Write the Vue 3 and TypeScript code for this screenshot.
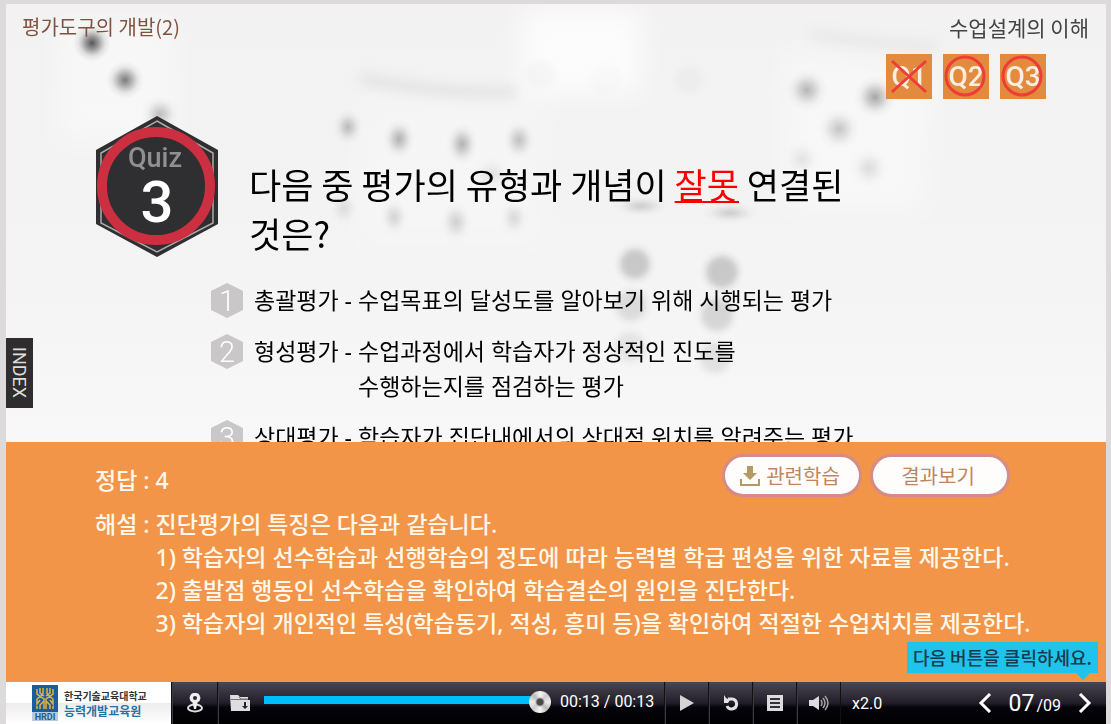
<script setup lang="ts">
import { ref } from 'vue'

interface Option {
  term: string
  lines: string[]
}

const options: Option[] = [
  { term: '총괄평가', lines: ['수업목표의 달성도를 알아보기 위해 시행되는 평가'] },
  { term: '형성평가', lines: ['수업과정에서 학습자가 정상적인 진도를', '수행하는지를 점검하는 평가'] },
  { term: '상대평가', lines: ['학습자가 집단내에서의 상대적 위치를 알려주는 평가'] },
]

const results = [
  { label: 'Q1', correct: false },
  { label: 'Q2', correct: true },
  { label: 'Q3', correct: true },
]

const notes = [
  '학습자의 선수학습과 선행학습의 정도에 따라 능력별 학급 편성을 위한 자료를 제공한다.',
  '출발점 행동인 선수학습을 확인하여 학습결손의 원인을 진단한다.',
  '학습자의 개인적인 특성(학습동기, 적성, 흥미 등)을 확인하여 적절한 수업처치를 제공한다.',
]

interface Pip {
  x: number
  y: number
  rx: number
  ry: number
  o: number
}

const pips: Pip[] = [
  { x: 86, y: 39, rx: 14, ry: 14, o: 0.85 },
  { x: 119, y: 76, rx: 14, ry: 14, o: 0.65 },
  { x: 154, y: 110, rx: 14, ry: 13, o: 0.3 },
  { x: 342, y: 123, rx: 10, ry: 13, o: 0.3 },
  { x: 393, y: 135, rx: 11, ry: 15, o: 0.36 },
  { x: 456, y: 140, rx: 11, ry: 16, o: 0.36 },
  { x: 513, y: 136, rx: 11, ry: 15, o: 0.28 },
  { x: 338, y: 204, rx: 10, ry: 13, o: 0.12 },
  { x: 388, y: 213, rx: 10, ry: 14, o: 0.18 },
  { x: 450, y: 218, rx: 11, ry: 16, o: 0.2 },
  { x: 508, y: 214, rx: 10, ry: 14, o: 0.15 },
  { x: 486, y: 170, rx: 15, ry: 13, o: 0.1 },
  { x: 635, y: 202, rx: 24, ry: 6, o: 0.2 },
  { x: 724, y: 209, rx: 24, ry: 6, o: 0.2 },
  { x: 801, y: 86, rx: 16, ry: 16, o: 0.34 },
  { x: 869, y: 93, rx: 16, ry: 16, o: 0.42 },
  { x: 833, y: 125, rx: 16, ry: 16, o: 0.26 },
  { x: 796, y: 155, rx: 14, ry: 14, o: 0.1 },
  { x: 863, y: 164, rx: 15, ry: 15, o: 0.14 },
]

const discs = [
  { x: 629, y: 260, r: 15, o: 0.24 },
  { x: 716, y: 268, r: 16, o: 0.24 },
  { x: 625, y: 302, r: 15, o: 0.14 },
  { x: 711, y: 311, r: 16, o: 0.18 },
  { x: 624, y: 343, r: 15, o: 0.1 },
  { x: 709, y: 354, r: 15, o: 0.12 },
  { x: 600, y: 75, r: 14, o: 0.025 },
  { x: 535, y: 70, r: 15, o: 0.02 },
  { x: 683, y: 76, r: 14, o: 0.02 },
]

const position = ref(13)
</script>

<template>
  <div class="frame">
    <section class="quiz">
      <svg class="scene" width="1100" height="438" aria-hidden="true">
        <defs>
          <radialGradient id="pip">
            <stop offset="0" stop-color="#222" stop-opacity="0.9" />
            <stop offset="0.35" stop-color="#333" stop-opacity="0.55" />
            <stop offset="0.7" stop-color="#555" stop-opacity="0.14" />
            <stop offset="1" stop-color="#777" stop-opacity="0" />
          </radialGradient>
          <filter id="soft" x="-30%" y="-30%" width="160%" height="160%"><feGaussianBlur stdDeviation="3" /></filter>
          <filter id="haze" x="-30%" y="-50%" width="160%" height="200%"><feGaussianBlur stdDeviation="14" /></filter>
          <filter id="thin" x="-20%" y="-100%" width="140%" height="300%"><feGaussianBlur stdDeviation="6" /></filter>
        </defs>
        <g filter="url(#haze)" fill="#fff">
          <rect x="50" y="20" width="120" height="120" opacity="0.4" />
          <rect x="515" y="5" width="120" height="85" opacity="0.75" />
          <rect x="350" y="95" width="190" height="150" opacity="0.25" />
          <path d="M775 45 930 65 920 210 780 210Z" opacity="0.4" />
        </g>
        <g filter="url(#thin)" fill="none" stroke="#999" stroke-width="9">
          <path d="M355 74Q440 92 510 88" opacity="0.2" />
          <path d="M805 30Q880 42 930 42" opacity="0.12" />
        </g>
        <ellipse
          v-for="p in pips"
          :key="`${p.x}-${p.y}`"
          :cx="p.x"
          :cy="p.y"
          :rx="p.rx + 5"
          :ry="p.ry + 5"
          :opacity="p.o"
          fill="url(#pip)"
        />
        <g filter="url(#soft)">
          <circle v-for="d in discs" :key="`${d.x}-${d.y}`" :cx="d.x" :cy="d.y" :r="d.r" :opacity="d.o" fill="#444" />
        </g>
      </svg>

      <header class="top">
        <span class="chapter">평가도구의 개발(2)</span>
        <span class="course">수업설계의 이해</span>
      </header>

      <nav class="results" aria-label="퀴즈 결과">
        <button v-for="r in results" :key="r.label" type="button" class="result">
          <svg viewBox="0 0 46 45" width="46" height="45">
            <text x="23" y="32" text-anchor="middle">{{ r.label }}</text>
            <circle v-if="r.correct" cx="22" cy="22" r="19" />
            <path v-else d="M6 7 40 38M40 7 6 38" />
          </svg>
        </button>
      </nav>

      <div class="question">
        <svg class="badge" viewBox="0 0 122 142" width="122" height="142">
          <path d="M61 0 122 34V108L61 141 0 108V34Z" fill="#2f2e30" />
          <path d="M61 5 117 37V107L61 136 5 107V37Z" fill="none" stroke="#aaa" stroke-width="1.5" />
          <circle cx="60" cy="70" r="54" fill="#2f2e30" stroke="#cb2f40" stroke-width="10" />
          <text class="badge-label" x="59" y="51" text-anchor="middle">Quiz</text>
          <text class="badge-number" x="61" y="106" text-anchor="middle">3</text>
        </svg>
        <h1>다음 중 평가의 유형과 개념이 <em>잘못</em> 연결된<br />것은?</h1>
      </div>

      <ol class="options">
        <li v-for="(o, i) in options" :key="o.term">
          <svg class="number" viewBox="0 0 32 35" width="32" height="35">
            <path d="M16 0 32 8V27L16 35 0 27V8Z" fill="#c9c7c8" />
            <text x="16" y="28" text-anchor="middle">{{ i + 1 }}</text>
          </svg>
          <span class="term">{{ o.term }} - </span>
          <span class="desc"><span v-for="line in o.lines" :key="line">{{ line }}</span></span>
        </li>
      </ol>

      <button type="button" class="index">INDEX</button>
    </section>

    <section class="answer">
      <div class="actions">
        <button type="button">
          <svg viewBox="0 0 20 20" width="20" height="20" aria-hidden="true">
            <path d="M7 0H13V7H17L10 14 3 7H7Z" fill="#b39a60" />
            <path d="M1 13V19H19V13" fill="none" stroke="#b39a60" stroke-width="2" />
          </svg>
          관련학습
        </button>
        <button type="button">결과보기</button>
      </div>
      <p class="key">정답 : 4</p>
      <div class="explain">
        <span class="lead">해설 : </span>
        <div>
          <p>진단평가의 특징은 다음과 같습니다.</p>
          <p v-for="(n, i) in notes" :key="n">{{ i + 1 }}) {{ n }}</p>
        </div>
      </div>
    </section>

    <footer class="player">
      <a class="brand" href="#">
        <svg viewBox="0 0 26 36" width="26" height="36" aria-hidden="true">
          <rect width="26" height="27" fill="#1c5da0" />
          <rect y="27" width="26" height="9" fill="#b8cbdc" />
          <g fill="none" stroke="#e0b33f" stroke-width="1.500">
            <path d="M5 4V9L12 14V24M8 3V8L12 11M11 3V9L5 14V19L8 15M12 16 8 20V24M5 21V24" />
            <path d="M21 4V9L14 14V24M18 3V8L14 11M15 3V9L21 14V19L18 15M14 16 18 20V24M21 21V24" />
          </g>
          <text x="13" y="35" text-anchor="middle">HRDI</text>
        </svg>
        <span class="names"><b>한국기술교육대학교</b><b class="sub">능력개발교육원</b></span>
      </a>
      <button type="button" class="cell wide" aria-label="위치">
        <svg viewBox="0 0 18 20" width="18" height="20">
          <ellipse cx="9" cy="15" rx="7" ry="3.5" fill="none" stroke="#ddd" stroke-width="2" />
          <path d="M9 0A5 5 0 0 1 11.500 9.500L10 16H8L6.500 9.500A5 5 0 0 1 9 0Z" fill="#eee" />
          <circle cx="9" cy="5" r="2" fill="#29262f" />
        </svg>
      </button>
      <button type="button" class="cell" aria-label="자료실">
        <svg viewBox="0 0 22 18" width="22" height="18">
          <path d="M1 1H9L11 3H19V6H21V17H2Z" fill="#dedee0" />
          <path d="M2 5.500H19M10 3 12 5H19" fill="none" stroke="#77757c" />
          <path d="M15 8H17V12H19L16 15 13 12H15Z" fill="#25222b" />
        </svg>
      </button>
      <label class="seek">
        <input v-model="position" type="range" min="0" max="13" aria-label="재생 위치" />
      </label>
      <span class="time">00:13 / 00:13</span>
      <button type="button" class="cell" aria-label="재생">
        <svg viewBox="0 0 14 16" width="14" height="16"><path d="M0 0 14 8 0 16Z" fill="#d4d4d6" /></svg>
      </button>
      <button type="button" class="cell" aria-label="다시 재생">
        <svg viewBox="0 0 16 16" width="16" height="16">
          <path d="M5 4H9A5 5 0 1 1 4 11" fill="none" stroke="#e2e2e4" stroke-width="3" />
          <path d="M1 0 3 3 7 5 5 8H1Z" fill="#e2e2e4" />
        </svg>
      </button>
      <button type="button" class="cell" aria-label="목록">
        <svg viewBox="0 0 16 16" width="16" height="16">
          <rect width="16" height="16" fill="#dcdcde" />
          <path d="M3 4H13M3 8H13M3 12H13" stroke="#33303a" stroke-width="2" />
        </svg>
      </button>
      <button type="button" class="cell" aria-label="음량">
        <svg viewBox="0 0 20 16" width="20" height="16">
          <path d="M0 5H4L10 1V15L4 11H0Z" fill="#dcdcde" />
          <path d="M12 5Q14 8 12 11M14 3Q18 8 14 13M16 1Q22 8 16 15" fill="none" stroke="#a2a0a8" stroke-width="1.500" />
        </svg>
      </button>
      <button type="button" class="speed">x2.0</button>
      <div class="pager">
        <button type="button" aria-label="이전">
          <svg viewBox="0 0 14 20" width="14" height="20"><path d="M12 1 3 10 12 19" /></svg>
        </button>
        <span class="page"><span>07</span><small>/09</small></span>
        <button type="button" aria-label="다음">
          <svg viewBox="0 0 14 20" width="14" height="20"><path d="M2 1 11 10 2 19" /></svg>
        </button>
        <div class="hint" role="tooltip">다음 버튼을 클릭하세요.</div>
      </div>
    </footer>
  </div>
</template>

<style>
body {
  margin: 0;
  background: #dcdadb;
}
</style>

<style scoped>
.frame {
  box-sizing: border-box;
  display: flex;
  flex-direction: column;
  height: 100vh;
  padding: 4px 5px 0 6px;
  font-family: "Noto Sans", "Noto Sans CJK KR", sans-serif;
}

button {
  margin: 0;
  padding: 0;
  border: 0;
  background: none;
  color: inherit;
  font: inherit;
  cursor: pointer;
}

svg {
  display: block;
  flex: none;
}

.quiz {
  position: relative;
  flex: 1;
  min-height: 0;
  overflow: hidden;
  background: linear-gradient(#f2f2f2, #f3f3f3 50%, #f8f8f8);
}

.scene {
  position: absolute;
  top: 0;
  left: 0;
}

.top {
  position: relative;
  display: flex;
  justify-content: space-between;
  padding: 7px 17px 0 16px;
  font-family: "Noto Sans CJK KR", sans-serif;
  font-size: 21px;
  line-height: 32px;
}

.chapter {
  color: #805340;
  font-size: 20px;
}

.course {
  color: #444;
}

.results {
  position: relative;
  display: flex;
  justify-content: flex-end;
  gap: 11px;
  padding: 11px 60px 0 0;
}

.result {
  background: #e28b3e;
}

.result text {
  fill: #fbeee0;
  font-family: Roboto, sans-serif;
  font-size: 28px;
  font-weight: 500;
}

.result circle,
.result path {
  fill: none;
  stroke: #ee3d38;
  stroke-width: 3px;
}

.question {
  position: relative;
  display: flex;
  gap: 31px;
  padding: 17px 0 0 90px;
}

.badge-label {
  fill: #909090;
  font-family: Roboto, sans-serif;
  font-size: 27px;
  font-weight: 500;
}

.badge-number {
  fill: #fff;
  font-family: Roboto, sans-serif;
  font-size: 58px;
  font-weight: 500;
}

h1 {
  margin: 0;
  padding-top: 43px;
  color: #000;
  font-family: "Noto Sans CJK KR", sans-serif;
  font-size: 35px;
  font-weight: 400;
  line-height: 49px;
}

h1 em {
  color: #f00;
  font-style: normal;
  text-decoration: underline;
  text-decoration-thickness: 2px;
  text-underline-offset: 2px;
}

.options {
  position: relative;
  display: grid;
  gap: 16px;
  margin: 0;
  padding: 25px 0 0 205px;
  list-style: none;
  color: #000;
  font-size: 23px;
  line-height: 35px;
}

.options li {
  display: flex;
}

.number {
  margin-right: 11px;
}

.number text {
  fill: #fff;
  font-family: Roboto, sans-serif;
  font-size: 29px;
  font-weight: 300;
}

.term {
  white-space: pre;
}

.desc {
  display: grid;
}

.index {
  position: absolute;
  top: 334px;
  left: 0;
  width: 27px;
  height: 70px;
  background: #2f2d2e;
  color: #ddd;
  font-family: Roboto, sans-serif;
  font-size: 18px;
  line-height: 27px;
  writing-mode: vertical-rl;
}

.answer {
  position: relative;
  box-sizing: border-box;
  min-height: 240px;
  padding: 22px 40px 40px 89px;
  background: #f29548;
  color: #fff8ea;
  font-size: 23px;
  font-weight: 500;
  line-height: 33px;
}

.answer p {
  margin: 0;
}

.answer .key {
  margin-bottom: 11px;
}

.explain {
  display: flex;
}

.lead {
  white-space: pre;
}

.actions {
  position: absolute;
  top: 12px;
  right: 96px;
  display: flex;
  gap: 8px;
}

.actions button {
  box-sizing: border-box;
  display: flex;
  align-items: center;
  justify-content: center;
  gap: 6px;
  width: 140px;
  height: 43px;
  padding-right: 4px;
  border: 3px solid #d58b88;
  border-radius: 22px;
  background: #fffdfc;
  color: #bd8661;
  font-family: "Noto Sans CJK KR", sans-serif;
  font-size: 20px;
  font-weight: 400;
}

.player {
  display: flex;
  flex: none;
  height: 42px;
  background: linear-gradient(#4a4752, #211e29 50%, #06040b 60%, #000);
  color: #fff;
  font-family: Roboto, sans-serif;
  font-size: 16px;
}

.brand {
  box-sizing: border-box;
  display: flex;
  align-items: center;
  gap: 6px;
  width: 165px;
  padding-left: 26px;
  background: linear-gradient(#fff 50%, #ececec 50%, #fff);
  text-decoration: none;
}

.brand text {
  fill: #205b91;
  font-family: Roboto, sans-serif;
  font-size: 9px;
  font-weight: 700;
}

.names {
  display: grid;
  color: #333;
  font-family: "Noto Sans CJK KR", sans-serif;
  font-size: 10px;
  line-height: 15px;
  white-space: nowrap;
}

.sub {
  color: #2674a4;
  font-size: 12px;
}

.cell {
  box-sizing: border-box;
  display: flex;
  align-items: center;
  justify-content: center;
  width: 44px;
  border-left: 1px solid #111;
  box-shadow: inset 1px 0 #3c3943;
}

.wide {
  width: 46px;
}

.seek {
  display: flex;
  flex: 1;
  align-items: center;
  max-width: 287px;
  padding-left: 3px;
}

.seek input {
  width: 100%;
  height: 8px;
  margin: 0 0 6px;
  border: 0;
  appearance: none;
  background: linear-gradient(90deg, #00bdfb 95%, transparent 95%);
}

.seek input::-webkit-slider-thumb {
  width: 22px;
  height: 22px;
  margin-top: 3px;
  border-radius: 50%;
  appearance: none;
  background:
    radial-gradient(circle, #4c4a4a 3px, #aaa 4px, transparent 5px),
    conic-gradient(#f7f7f7, #ccc, #eee, #bbb, #f7f7f7, #ccc, #eee, #bbb, #f7f7f7);
}

.time {
  width: 113px;
  padding-left: 9px;
  box-sizing: border-box;
  line-height: 39px;
  white-space: nowrap;
}

.speed {
  box-sizing: border-box;
  padding: 0 11px;
  border-left: 1px solid #111;
}

.pager {
  position: relative;
  display: flex;
  align-items: center;
  gap: 17px;
  margin-left: auto;
  padding-right: 14px;
}

.pager path {
  fill: none;
  stroke: #fff;
  stroke-width: 3px;
}

.page {
  font-size: 23px;
}

.page small {
  padding-left: 2px;
  font-size: 16px;
}

.hint {
  position: absolute;
  right: 8px;
  bottom: 51px;
  padding: 0 6px;
  background: #1fc3ec;
  color: #173a4d;
  font-family: "Noto Sans CJK KR", sans-serif;
  font-size: 18px;
  font-weight: 500;
  line-height: 31px;
  white-space: nowrap;
}

.hint::after {
  position: absolute;
  top: 100%;
  right: 8px;
  border: 7px solid transparent;
  border-top-color: #1fc3ec;
  border-bottom: 0;
  content: "";
}
</style>
